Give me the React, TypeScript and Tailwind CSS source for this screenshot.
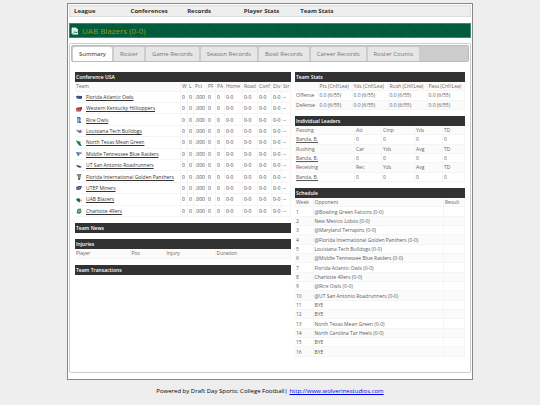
import type { ReactNode } from "react";

const NAV = ["League", "Conferences", "Records", "Player Stats", "Team Stats"];
const TABS = [
  "Summary",
  "Roster",
  "Game Records",
  "Season Records",
  "Bowl Records",
  "Career Records",
  "Roster Counts",
];

const TEAMS: { name: string; logo: ReactNode }[] = [
  {
    name: "Florida Atlantic Owls",
    logo: (
      <>
        <path d="M0 2.500 1 1.800 6 2 6 4.200 4.500 5 1 4.500z" fill="#27457f" />
        <path d="M1 3h4" stroke="#6c83ad" strokeWidth=".5" />
      </>
    ),
  },
  {
    name: "Western Kentucky Hilltoppers",
    logo: (
      <>
        <path d="M0 2 6 0.800 6 3 4.500 5.500 0.500 5.500z" fill="#a03a45" />
        <path d="M1 4h3" stroke="#e2b6ba" strokeWidth=".6" />
      </>
    ),
  },
  {
    name: "Rice Owls",
    logo: (
      <>
        <path d="M1 0h3l1 2-1 1 1.500 3H1.500z" fill="#4a76ad" />
        <path d="M2.500 1v4M1 3h3" stroke="#c7d8ea" strokeWidth=".6" />
      </>
    ),
  },
  {
    name: "Louisiana Tech Bulldogs",
    logo: (
      <>
        <path d="M0 1.500 3 2.500 5 1.500 6 4 4 5 1.500 4z" fill="#7186b8" />
        <path d="M2.500 2.500 5.500 4 3.500 5z" fill="#d0525c" />
      </>
    ),
  },
  {
    name: "North Texas Mean Green",
    logo: (
      <>
        <path d="M0 0.500 5 2 4 3 6 6 3 5.500z" fill="#157a4d" />
        <path d="M0 .5 2 4 3 2z" fill="#2c8c62" />
      </>
    ),
  },
  {
    name: "Middle Tennessee Blue Raiders",
    logo: (
      <>
        <path d="M0 1 6 1.500 5 3 3.500 3 3 5 1.500 4.500z" fill="#3c7fae" />
        <path d="M2 2h3" stroke="#bcd7e8" strokeWidth=".5" />
      </>
    ),
  },
  {
    name: "UT San Antonio Roadrunners",
    logo: (
      <>
        <path d="M0 2 3 2.500 6 4 4 4.800 1.500 4z" fill="#30426b" />
        <path d="M0 2 2 3.500" stroke="#d49a72" strokeWidth=".5" />
      </>
    ),
  },
  {
    name: "Florida International Golden Panthers",
    logo: (
      <>
        <path d="M0.500 0h5L4.500 3 4 6H2L2 3z" fill="#6a6c70" />
        <path d="M1 1h4M2 3h2" stroke="#d3c28c" strokeWidth=".7" />
      </>
    ),
  },
  {
    name: "UTEP Miners",
    logo: (
      <>
        <path d="M0 2.500 2 1 6 1 5 4 3 5 0.500 5z" fill="#54527e" />
        <path d="M1 4 4 2.500" stroke="#c3a8a5" strokeWidth=".6" />
      </>
    ),
  },
  {
    name: "UAB Blazers",
    logo: (
      <>
        <path d="M0 2 3 1 4.500 3 3.500 5.500 1 4z" fill="#24684a" />
        <path d="M4 2.500 6 3 5 5z" fill="#dd8b5c" />
      </>
    ),
  },
  {
    name: "Charlotte 49ers",
    logo: (
      <>
        <path d="M1.500 1 5 0.500 5.500 4.500 3 6 0.500 5z" fill="#4d8c57" />
        <path d="M2 3h2.500" stroke="#cfe2d0" strokeWidth=".7" />
      </>
    ),
  },
];

const STANDING_HEADS = ["Team", "W", "L", "Pct", "PF", "PA", "Home", "Road", "Conf", "Div", "Str"];
const STANDING_VALUES = ["0", "0", ".000", "0", "0", "0-0", "0-0", "0-0", "0-0", "--"];

const LEADERS = [
  ["Passing", "Att", "Cmp", "Yds", "TD"],
  ["Rushing", "Car", "Yds", "Avg", "TD"],
  ["Receiving", "Rec", "Yds", "Avg", "TD"],
];

const SCHEDULE = [
  "@Bowling Green Falcons (0-0)",
  "New Mexico Lobos (0-0)",
  "@Maryland Terrapins (0-0)",
  "@Florida International Golden Panthers (0-0)",
  "Louisiana Tech Bulldogs (0-0)",
  "@Middle Tennessee Blue Raiders (0-0)",
  "Florida Atlantic Owls (0-0)",
  "Charlotte 49ers (0-0)",
  "@Rice Owls (0-0)",
  "@UT San Antonio Roadrunners (0-0)",
  "BYE",
  "BYE",
  "North Texas Mean Green (0-0)",
  "North Carolina Tar Heels (0-0)",
  "BYE",
  "BYE",
];

const TABLE =
  "w-full table-fixed border-collapse text-left text-[5px] leading-[7px] text-[#5c5c5c] [&_td]:whitespace-nowrap [&_td]:border-r [&_td]:border-b [&_td]:border-[#f5f5f5] [&_td]:pl-px [&_td]:pr-0 [&_td]:pt-px [&_td]:pb-0 [&_th]:whitespace-nowrap [&_th]:border-r [&_th]:border-b [&_th]:border-[#f5f5f5] [&_th]:bg-[#fbfbfb] [&_th]:pl-px [&_th]:pr-0 [&_th]:pt-px [&_th]:pb-0 [&_th]:font-normal [&_th]:text-[#666]";

function Heading({ children }: { children: ReactNode }) {
  return (
    <h2 className="h-[10px] bg-[#323232] px-px text-[5px] leading-[10px] font-semibold text-white">
      {children}
    </h2>
  );
}

function Standings() {
  return (
    <section>
      <Heading>Conference USA</Heading>
      <table className={`${TABLE} h-[135px]`}>
        <colgroup>
          <col />
          <col className="w-[7px]" />
          <col className="w-[6px]" />
          <col className="w-[13px]" />
          <col className="w-[9px]" />
          <col className="w-[9px]" />
          <col className="w-[18px]" />
          <col className="w-[15px]" />
          <col className="w-[14px]" />
          <col className="w-[10px]" />
          <col className="w-[9px]" />
        </colgroup>
        <thead>
          <tr className="h-[9px]">
            {STANDING_HEADS.map((h) => (
              <th key={h}>{h}</th>
            ))}
          </tr>
        </thead>
        <tbody className="text-[#444]">
          {TEAMS.map((t) => (
            <tr key={t.name}>
              <td>
                <div className="flex items-center gap-1">
                  <svg viewBox="0 0 6 6" className="size-[6px] shrink-0" aria-hidden="true">
                    {t.logo}
                  </svg>
                  <a href="#team" className="text-[#333] underline">
                    {t.name}
                  </a>
                </div>
              </td>
              {STANDING_VALUES.map((v, i) => (
                <td key={i}>{v}</td>
              ))}
            </tr>
          ))}
        </tbody>
      </table>
    </section>
  );
}

function Injuries() {
  return (
    <section>
      <Heading>Injuries</Heading>
      <table className={TABLE}>
        <colgroup>
          <col className="w-[55px]" />
          <col className="w-[35px]" />
          <col className="w-[50px]" />
          <col />
        </colgroup>
        <thead>
          <tr className="h-[9px]">
            <th>Player</th>
            <th>Pos</th>
            <th>Injury</th>
            <th>Duration</th>
          </tr>
        </thead>
      </table>
    </section>
  );
}

function TeamStats() {
  return (
    <section>
      <Heading>Team Stats</Heading>
      <table className={`${TABLE} h-[28px]`}>
        <colgroup>
          <col className="w-[23px]" />
          <col className="w-[34px]" />
          <col className="w-[36px]" />
          <col className="w-[39px]" />
          <col />
        </colgroup>
        <tbody>
          <tr>
            <th />
            <th>Pts (Cnf/Lea)</th>
            <th>Yds (Cnf/Lea)</th>
            <th>Rush (Cnf/Lea)</th>
            <th>Pass (Cnf/Lea)</th>
          </tr>
          {["Offense", "Defense"].map((side) => (
            <tr key={side} className="odd:bg-[#fbfbfb]">
              <td>{side}</td>
              <td>0.0 (6/55)</td>
              <td>0.0 (6/55)</td>
              <td>0.0 (6/55)</td>
              <td>0.0 (6/55)</td>
            </tr>
          ))}
        </tbody>
      </table>
    </section>
  );
}

function Leaders() {
  return (
    <section>
      <Heading>Individual Leaders</Heading>
      <table className={`${TABLE} h-[56px]`}>
        <colgroup>
          <col />
          <col className="w-[27px]" />
          <col className="w-[33px]" />
          <col className="w-[28px]" />
          <col className="w-[22px]" />
        </colgroup>
        {LEADERS.map((heads) => (
          <tbody key={heads[0]}>
            <tr>
              {heads.map((h) => (
                <th key={h}>{h}</th>
              ))}
            </tr>
            <tr>
              <td>
                <a href="#player" className="underline">
                  Banda, B.
                </a>
              </td>
              <td>0</td>
              <td>0</td>
              <td>0</td>
              <td>0</td>
            </tr>
          </tbody>
        ))}
      </table>
    </section>
  );
}

function Schedule() {
  return (
    <section>
      <Heading>Schedule</Heading>
      <table className={`${TABLE} h-[159px]`}>
        <colgroup>
          <col className="w-[18px]" />
          <col />
          <col className="w-[21px]" />
        </colgroup>
        <tbody>
          <tr>
            <th>Week</th>
            <th>Opponent</th>
            <th>Result</th>
          </tr>
          {SCHEDULE.map((game, i) => (
            <tr key={i} className="odd:bg-[#fbfbfb]">
              <td>{i + 1}</td>
              <td>{game}</td>
              <td />
            </tr>
          ))}
        </tbody>
      </table>
    </section>
  );
}

export default function App() {
  return (
    <div className="min-h-screen bg-[#eee] pt-[3px] font-['Open_Sans','Noto_Sans',sans-serif]">
      <div className="mx-[67px] border border-[#888] bg-white px-px pt-px pb-[6px]">
        <nav className="flex h-[12px] items-center border border-[#ddd] bg-[#eee] pl-1 text-[6px] leading-[8px] font-bold text-[#333]">
          {NAV.map((item) => (
            <a key={item} href="#nav" className="w-1/7 whitespace-nowrap">
              {item}
            </a>
          ))}
        </nav>

        <header className="mt-[6px] flex h-[15px] items-center gap-[3px] border border-[#3f8a6c] bg-[repeating-linear-gradient(45deg,#005a3a_0px,#005a3a_1px,#035f3f_1px,#035f3f_2px)] pl-px">
          <svg viewBox="0 0 8 8" className="size-[8px]" aria-hidden="true">
            <path d="M1 1h4l2 2v1.500L5 5.500 4 5 1 7z" fill="#dbe7f5" />
            <path d="M1 7.500 4 5.500 5 6.500 7 5V7.500z" fill="#fff" />
            <path d="M2 5.500 3.500 3.500 5 5z" fill="#9cc49a" />
            <path d="M1 7V1h4l2 2" fill="none" stroke="#f4f7fb" strokeWidth=".8" />
          </svg>
          <h1 className="text-[8px] leading-[12px] text-[#9a960c]">UAB Blazers (0-0)</h1>
        </header>

        <main className="mt-[5px] rounded-[2px] border border-[#ccc] p-px">
          <div
            role="tablist"
            className="flex h-[17px] items-end gap-[2px] rounded-[2px] border border-[#bbb] bg-[#ccc] pl-px text-[6px] leading-[8px]"
          >
            {TABS.map((tab, i) => (
              <button
                key={tab}
                type="button"
                role="tab"
                aria-selected={i === 0}
                className="h-[14px] rounded-t-[2px] bg-[#e6e6e6] px-[6px] whitespace-nowrap text-[#777] aria-selected:bg-white aria-selected:text-[#222]"
              >
                {tab}
              </button>
            ))}
          </div>

          <div className="flex items-start gap-1 px-1 pt-[10px] pb-[14px]">
            <div className="flex w-[216px] shrink-0 flex-col gap-[6px]">
              <Standings />
              <section>
                <Heading>Team News</Heading>
              </section>
              <Injuries />
              <section>
                <Heading>Team Transactions</Heading>
              </section>
            </div>
            <div className="flex min-w-0 flex-1 flex-col gap-[6px]">
              <TeamStats />
              <Leaders />
              <Schedule />
            </div>
          </div>
        </main>
      </div>

      <footer className="mt-[6px] text-center text-[6px] leading-[10px] text-black">
        Powered by Draft Day Sports: College Football|{" "}
        <a href="http://www.wolverinestudios.com" className="text-[#0000ee] underline">
          http://www.wolverinestudios.com
        </a>
      </footer>
    </div>
  );
}
